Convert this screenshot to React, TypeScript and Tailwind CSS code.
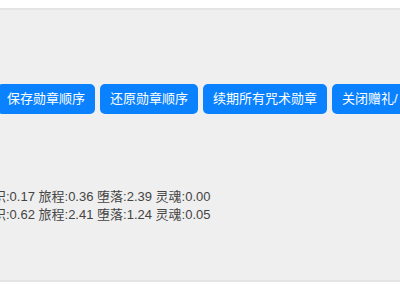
export default function App() {
  const font = { fontFamily: '"Liberation Sans", "Noto Sans CJK SC", sans-serif' };
  const btns = ["保存勋章顺序", "还原勋章顺序", "续期所有咒术勋章", "关闭赠礼/"];
  return (
    <div className="w-[400px] h-[284px] bg-white overflow-hidden" style={font}>
      <div className="mt-[8px] h-[274px] border-y-2 border-[#e4e4e4] bg-[#efefef] overflow-hidden">
        <div className="flex gap-[5px] ml-[-3px] mt-[74px] whitespace-nowrap">
          {btns.map((b) => (
            <div
              key={b}
              className="shrink-0 h-[30px] px-[10px] rounded-[5px] bg-[#0a82ff] text-white text-[13px] leading-[30px]"
            >
              {b}
            </div>
          ))}
        </div>
        <div className="mt-[74px] ml-[-7px] text-[13px] leading-[18px] text-[#444] whitespace-nowrap">
          <div>识:0.17 旅程:0.36 堕落:2.39 灵魂:0.00</div>
          <div>识:0.62 旅程:2.41 堕落:1.24 灵魂:0.05</div>
        </div>
      </div>
    </div>
  );
}
